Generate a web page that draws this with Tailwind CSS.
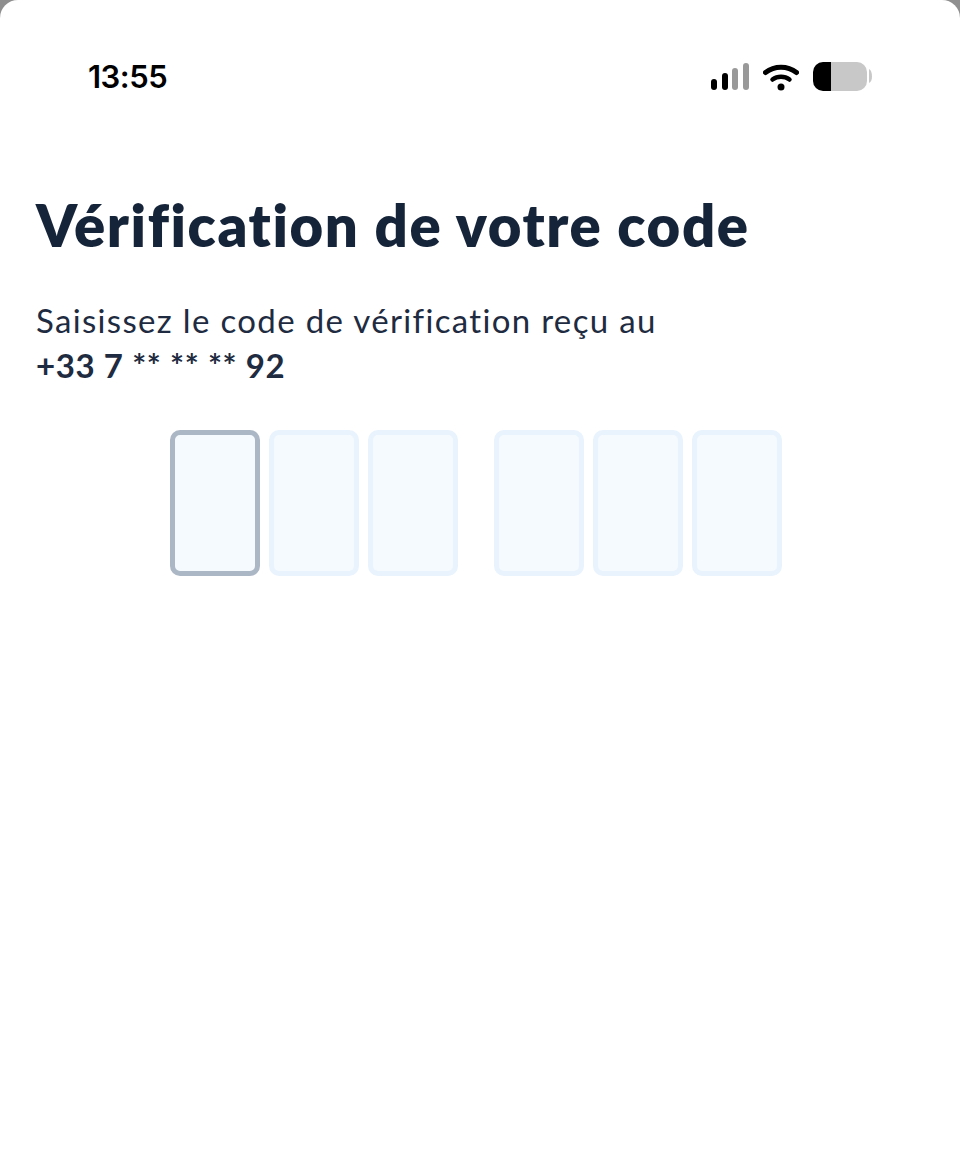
<!doctype html>
<html lang="fr">
  <head>
    <meta charset="UTF-8" />
    <meta name="viewport" content="width=device-width, initial-scale=1.0" />
    <title>Vérification</title>
    <script src="https://cdn.jsdelivr.net/npm/@tailwindcss/browser@4"></script>
  </head>
  <body class="bg-[#8f8f8f]">
    <div class="h-[1159px] overflow-hidden rounded-t-[18px] bg-white">
      <header class="flex h-[189px] items-start justify-between pt-[57px] pr-[88px] pl-[88px]">
        <span class="font-['Inter',sans-serif] text-[31px] leading-[40px] font-semibold tracking-[-0.5px] text-black">13:55</span>
        <div class="flex items-center pt-[5px]">
          <svg width="38" height="28" viewBox="0 0 38 28" class="mr-[14px]" aria-hidden="true">
            <rect x="0" y="16" width="6" height="11" rx="3" fill="#000" />
            <rect x="11" y="10" width="6" height="17" rx="3" fill="#000" />
            <rect x="21" y="5" width="6" height="22" rx="3" fill="#999" />
            <rect x="32" y="0" width="6" height="27" rx="3" fill="#999" />
          </svg>
          <svg width="36" height="28" viewBox="0 0 36 28" class="mr-[14px]" aria-hidden="true">
            <path d="M2.500 9.500C11.500 2.500 24.500 2.500 33.500 9.500" fill="none" stroke="#000" stroke-width="5" stroke-linecap="round" />
            <path d="M9.500 16.500C14.500 12.800 21.500 12.800 26.500 16.500" fill="none" stroke="#000" stroke-width="4.500" stroke-linecap="round" />
            <circle cx="18" cy="24" r="3.500" fill="#000" />
          </svg>
          <svg width="59" height="30" viewBox="0 0 59 30" aria-hidden="true">
            <path d="M18 0H44A10 10 0 0 1 54 10V19A10 10 0 0 1 44 29H18Z" fill="#c8c8c8" />
            <path d="M10 0H18V29H10A10 10 0 0 1 0 19V10A10 10 0 0 1 10 0Z" fill="#000" />
            <path d="M56 7C58 8 59 11 59 14.500C59 18 58 20 56 21Z" fill="#c8c8c8" />
          </svg>
        </div>
      </header>

      <main class="px-9 font-['Lato',sans-serif] text-[#16243a]">
        <h1 class="text-[58px] leading-[72px] font-extrabold tracking-[1.6px]">Vérification de votre code</h1>
        <p class="mt-[37px] text-[33px] leading-[45px] tracking-[1.33px] text-[#1e2b40]">Saisissez le code de vérification reçu au</p>
        <p class="text-[33px] leading-[45px] font-bold tracking-[0.6px] text-[#1e2b40]">+33 7 ** ** ** 92</p>

        <div class="mt-[42px] flex justify-center pr-[8px]">
          <div class="flex gap-[9px]">
            <div class="h-[146px] w-[90px] rounded-[10px] border-[5px] border-[#acb7c6] bg-[#f5fafe]"></div>
            <div class="h-[146px] w-[90px] rounded-[10px] border-[5px] border-[#e9f3fd] bg-[#f5fafe]"></div>
            <div class="h-[146px] w-[90px] rounded-[10px] border-[5px] border-[#e9f3fd] bg-[#f5fafe]"></div>
          </div>
          <div class="ml-[36px] flex gap-[9px]">
            <div class="h-[146px] w-[90px] rounded-[10px] border-[5px] border-[#e9f3fd] bg-[#f5fafe]"></div>
            <div class="h-[146px] w-[90px] rounded-[10px] border-[5px] border-[#e9f3fd] bg-[#f5fafe]"></div>
            <div class="h-[146px] w-[90px] rounded-[10px] border-[5px] border-[#e9f3fd] bg-[#f5fafe]"></div>
          </div>
        </div>
      </main>
    </div>
  </body>
</html>
